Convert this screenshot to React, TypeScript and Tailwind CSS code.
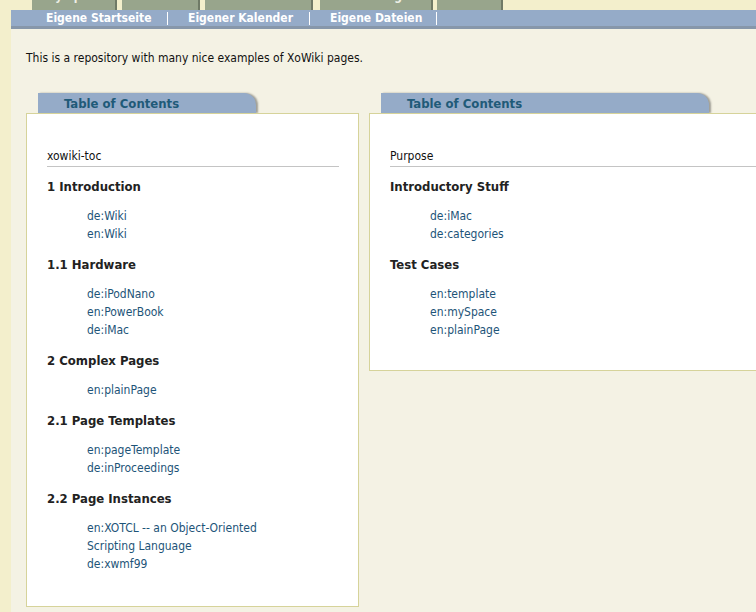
import React from 'react';

interface TocSection {
  title: string;
  links: string[];
}

interface TocPanelProps {
  label: string;
  sections: TocSection[];
  width: string;
  tabWidth: string;
  bottom: string;
}

const topTabs = [
  { label: 'My Space', cls: 'ml-[32px] w-[85px]' },
  { label: 'Courses', cls: 'ml-[5px] w-[78px]' },
  { label: 'Communities', cls: 'ml-[5px] w-[108px]' },
  { label: 'Einstellungen', cls: 'ml-[7px] w-[113px]' },
  { label: 'Tools', cls: 'ml-[4px] w-[66px]' },
];

const navItems = [
  { label: 'Eigene Startseite', cls: 'w-[142px]' },
  { label: 'Eigener Kalender', cls: 'w-[142px]' },
  { label: 'Eigene Dateien', cls: 'w-[127px]' },
];

const leftSections: TocSection[] = [
  { title: '1 Introduction', links: ['de:Wiki', 'en:Wiki'] },
  { title: '1.1 Hardware', links: ['de:iPodNano', 'en:PowerBook', 'de:iMac'] },
  { title: '2 Complex Pages', links: ['en:plainPage'] },
  { title: '2.1 Page Templates', links: ['en:pageTemplate', 'de:inProceedings'] },
  { title: '2.2 Page Instances', links: ['en:XOTCL -- an Object-Oriented', 'Scripting Language', 'de:xwmf99'] },
];

const rightSections: TocSection[] = [
  { title: 'Introductory Stuff', links: ['de:iMac', 'de:categories'] },
  { title: 'Test Cases', links: ['en:template', 'en:mySpace', 'en:plainPage'] },
];

function TocPanel({ label, sections, width, tabWidth, bottom }: TocPanelProps) {
  return (
    <div className={`shrink-0 ${width}`}>
      {/* Tab */}
      <div
        className={`ml-[12px] h-[20px] ${tabWidth} bg-[#95abc8] rounded-tr-[12px] shadow-[2px_0_2px_rgba(0,0,0,0.35)] pl-[26px] text-[13px] leading-[21px] font-bold text-[#1f5a78]`}
      >
        Table of Contents
      </div>
      {/* Box */}
      <div className={`bg-white border border-[#d6d39a] pl-[20px] pr-[19px] pt-[35px] ${bottom}`}>
        <div className="border-b border-[#c4c4c4] text-[12px] leading-[15px] pb-[2px] text-[#111]">{label}</div>
        {sections.map((s, i) => (
          <div key={s.title} className={i === 0 ? 'mt-[10px]' : 'mt-[12px]'}>
            <div className="text-[13px] leading-[20px] font-bold text-[#222]">{s.title}</div>
            <div className="mt-[10px] pl-[40px]">
              {s.links.map((l) => (
                <div key={l} className="text-[12px] leading-[18px] text-[#1d5478]">
                  {l}
                </div>
              ))}
            </div>
          </div>
        ))}
      </div>
    </div>
  );
}

export default function App() {
  return (
    <div
      className="min-h-screen w-[756px] overflow-hidden bg-[#f3efcc]"
      style={{ fontFamily: '"DejaVu Sans Condensed", "DejaVu Sans", sans-serif' }}
    >
      {/* Top tabs */}
      <div className="flex h-[10px]">
        {topTabs.map((t) => (
          <div
            key={t.label}
            className={`${t.cls} h-[10px] overflow-hidden bg-[#98a58c] border-r-2 border-[#6f7a66] text-center`}
          >
            <div className="mt-[-10px] text-[12px] leading-[12px] font-bold text-[#eef0e6]">{t.label}</div>
          </div>
        ))}
      </div>

      {/* Nav bar */}
      <div className="ml-[11px] h-[19px] bg-[#95abc8] border-b-[3px] border-[#8797aa] flex items-center pl-[15px]">
        {navItems.map((n) => (
          <div
            key={n.label}
            className={`${n.cls} pl-[20px] h-[13px] border-r border-white flex items-center text-[12px] font-bold text-white whitespace-nowrap`}
          >
            {n.label}
          </div>
        ))}
      </div>

      {/* Main */}
      <div className="ml-[11px] bg-[#f4f2e4] pl-[15px] pt-[22px] min-h-[583px]">
        <p className="text-[12px] leading-[15px] text-[#111]">
          This is a repository with many nice examples of XoWiki pages.
        </p>
        <div className="mt-[27px] flex items-start gap-[10px]">
          <TocPanel label="xowiki-toc" sections={leftSections} width="w-[333px]" tabWidth="w-[218px]" bottom="pb-[33px]" />
          <TocPanel label="Purpose" sections={rightSections} width="w-[504px]" tabWidth="w-[328px]" bottom="pb-[31px]" />
        </div>
      </div>
    </div>
  );
}
